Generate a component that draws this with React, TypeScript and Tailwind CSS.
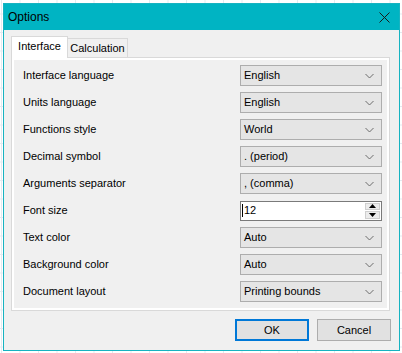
import { FC } from 'react';

const rows: { label: string; value: string; kind?: 'spin' }[] = [
  { label: 'Interface language', value: 'English' },
  { label: 'Units language', value: 'English' },
  { label: 'Functions style', value: 'World' },
  { label: 'Decimal symbol', value: '. (period)' },
  { label: 'Arguments separator', value: ', (comma)' },
  { label: 'Font size', value: '12', kind: 'spin' },
  { label: 'Text color', value: 'Auto' },
  { label: 'Background color', value: 'Auto' },
  { label: 'Document layout', value: 'Printing bounds' },
];

const Chevron = () => (
  <svg width="9" height="6" viewBox="0 0 9 6" className="shrink-0">
    <path d="M0.5 1 L4.5 5 L8.5 1" fill="none" stroke="#6d6d6d" strokeWidth="1" />
  </svg>
);

const Combo: FC<{ value: string }> = ({ value }) => (
  <div className="flex h-[21px] w-[142px] items-center justify-between border border-[#adadad] bg-[#e5e5e5] pl-[3px] pr-[7px]">
    <span>{value}</span>
    <Chevron />
  </div>
);

const Spin: FC<{ value: string }> = ({ value }) => (
  <div className="flex h-[20px] w-[142px] items-stretch border border-[#7a7a7a] bg-white">
    <div className="flex flex-1 items-center pl-[1px]">
      <span className="mr-[1px] h-[13px] w-px bg-black" />
      <span>{value}</span>
    </div>
    <div className="my-[1px] mr-[1px] flex w-[15px] flex-col gap-px">
      <div className="flex flex-1 items-center justify-center border border-[#cfcfcf] bg-[#ececec]">
        <svg width="7" height="4" viewBox="0 0 7 4">
          <path d="M0 4 L3.5 0 L7 4 Z" fill="#000" />
        </svg>
      </div>
      <div className="flex flex-1 items-center justify-center border border-[#cfcfcf] bg-[#ececec]">
        <svg width="7" height="4" viewBox="0 0 7 4">
          <path d="M0 0 L3.5 4 L7 0 Z" fill="#000" />
        </svg>
      </div>
    </div>
  </div>
);

export default function App() {
  return (
    <div
      className="h-[353px] w-[402px] bg-white bg-[linear-gradient(#e4eaf0_1px,transparent_1px),linear-gradient(90deg,#e4eaf0_1px,transparent_1px)] bg-[size:18.5px_18.5px] bg-[position:1px_-5px] p-[3px] pr-[2px] text-[11px] text-black"
      style={{ fontFamily: '"Segoe UI", "Liberation Sans", Arial, sans-serif' }}
    >
      <div className="flex h-[348px] w-[397px] flex-col border border-[#17b3c1] bg-[#f0f0f0]">
        {/* title bar */}
        <div className="flex h-[26px] items-center justify-between bg-[#00b4c3] pl-[4px] pr-[9px]">
          <span className="text-[12px]">Options</span>
          <svg width="11" height="11" viewBox="0 0 11 11">
            <path d="M0.5 0.5 L10.5 10.5 M10.5 0.5 L0.5 10.5" stroke="#1a1a1a" strokeWidth="1" />
          </svg>
        </div>

        {/* tabs */}
        <div className="flex items-end pl-[7px] pt-[6px]">
          <div className="relative z-10 -mb-px flex h-[22px] w-[57px] items-center justify-center border border-b-0 border-[#d9d9d9] bg-white pb-[2px]">
            Interface
          </div>
          <div className="flex h-[19px] w-[60px] items-center justify-center border border-b-0 border-l-0 border-[#d9d9d9] bg-[#f0f0f0]">
            Calculation
          </div>
        </div>

        {/* page */}
        <div className="ml-[7px] mr-[9px] h-[254px] border border-[#d9d9d9] bg-white p-[2px]">
          <div className="flex h-full flex-col gap-[6px] bg-[#f0f0f0] pl-[9px] pt-[5px]">
            {rows.map((r) => (
              <div key={r.label} className="flex h-[21px] items-center justify-between pr-[5px]">
                <span>{r.label}</span>
                {r.kind === 'spin' ? <Spin value={r.value} /> : <Combo value={r.value} />}
              </div>
            ))}
          </div>
        </div>

        {/* buttons */}
        <div className="flex justify-end gap-[8px] pr-[8px] pt-[8px]">
          <button className="h-[22px] w-[74px] border-2 border-[#0078d7] bg-[#e1e1e1]">OK</button>
          <button className="h-[22px] w-[74px] border border-[#adadad] bg-[#e1e1e1]">Cancel</button>
        </div>
      </div>
    </div>
  );
}
